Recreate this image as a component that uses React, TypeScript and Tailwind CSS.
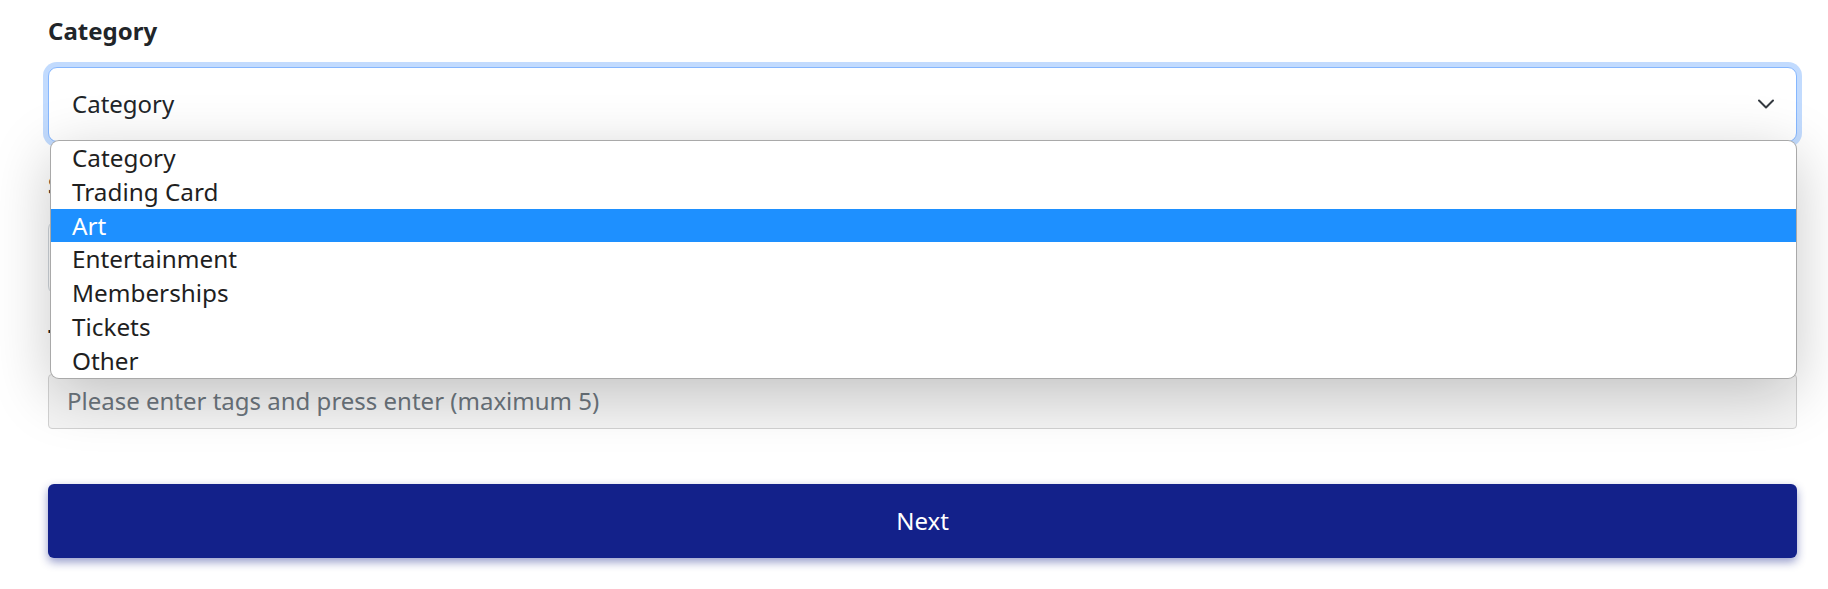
import React from 'react';

// Options of the category select, the open one is drawn as a popup list
const categoryOptions = [
  'Category',
  'Trading Card',
  'Art',
  'Entertainment',
  'Memberships',
  'Tickets',
  'Other',
];

const Chevron = () => (
  <svg width="16" height="10" viewBox="0 0 16 10" fill="none" className="shrink-0">
    <path d="M1 1.5 8 8.5 15 1.5" stroke="#343a40" strokeWidth="2" strokeLinecap="round" strokeLinejoin="round" />
  </svg>
);

export default function App() {
  const highlighted = 'Art';

  return (
    <div className="w-[1828px] h-[589px] overflow-hidden bg-white pl-[48px] pr-[31px] pt-[13px] font-['Noto_Sans',sans-serif] text-[24px] text-[#212529]">
      {/* Category */}
      <div className="mb-[25px]">
        <label className="block h-[36px] leading-[36px] font-bold mb-[17.5px]">Category</label>
        <div className="relative">
          <div className="relative z-20 h-[75px] flex items-center justify-between pl-[23px] pr-[22px] bg-white border border-[#86b7fe] rounded-[9px] shadow-[0_0_0_5px_rgba(13,110,253,0.25)]">
            <span className="leading-[36px]">Category</span>
            <Chevron />
          </div>

          {/* Open dropdown list */}
          <ul className="absolute left-[3px] right-[1px] top-[74.5px] z-30 bg-white rounded-[8px] overflow-hidden ring-1 ring-[#a9a9a9] shadow-[0_14px_60px_rgba(0,0,0,0.22)]">
            {categoryOptions.map((option) => (
              <li
                key={option}
                className={
                  option === highlighted
                    ? 'h-[33.8px] leading-[33.8px] pl-[21px] text-[24.3px] bg-[#1e90ff] text-white'
                    : 'h-[33.8px] leading-[33.8px] pl-[21px] text-[24.3px] text-[#1f1f1f]'
                }>
                {option}
              </li>
            ))}
          </ul>
        </div>
      </div>

      {/* Sub category (under the list) */}
      <div className="mb-[25px]">
        <label className="block h-[36px] leading-[36px] font-bold mb-[17.5px]">Sub Category</label>
        <div className="h-[75px] flex items-center px-[22px] bg-white border border-[#ced4da] rounded-[9px]">
          <span className="leading-[36px]">Sub Category</span>
        </div>
      </div>

      {/* Tags */}
      <div>
        <label className="block h-[36px] leading-[36px] font-bold mb-[17.5px]">Tags</label>
        <div className="h-[55px] flex items-center px-[18px] bg-[#f4f4f4] border border-[#d2d2d2] rounded-[4px]">
          <span className="leading-[36px] text-[#6c757d]">Please enter tags and press enter (maximum 5)</span>
        </div>
      </div>

      <button
        type="button"
        className="mt-[55.5px] w-full h-[74px] flex items-center justify-center bg-[#13218a] text-white rounded-[6px] shadow-[0_4px_10px_rgba(19,33,138,0.45)]">
        Next
      </button>
    </div>
  );
}
